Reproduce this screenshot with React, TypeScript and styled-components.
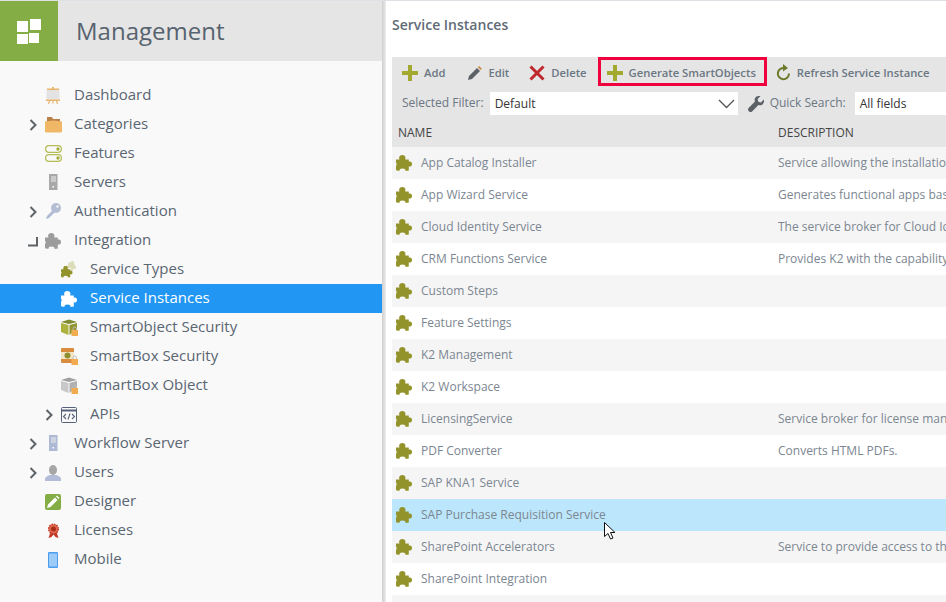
import React from "react";
import styled, { createGlobalStyle } from "styled-components";

const GlobalStyle = createGlobalStyle`
  html, body {
    margin: 0;
    padding: 0;
    height: 100%;
    overflow: hidden;
    background: #fff;
    font-family: "Open Sans", "Liberation Sans", sans-serif;
  }
  svg {
    flex: none;
  }
`;

// layout
const Page = styled.div`
  position: relative;
  display: flex;
  width: 946px;
  height: 602px;
  overflow: hidden;
  border-top: 1px solid #dfe0e5;
  box-sizing: border-box;
`;
const Sidebar = styled.aside`
  display: flex;
  flex-direction: column;
  flex: 0 0 382px;
  background: #f9f9f9;
`;
const Divider = styled.div`
  flex: 0 0 4px;
  background: linear-gradient(to right, #cfcfcf, #ececec);
`;
const Header = styled.header`
  display: flex;
  align-items: center;
  flex: 0 0 60px;
  background: #e5e5e5;
`;
const Logo = styled.div`
  display: flex;
  align-items: center;
  justify-content: center;
  width: 58px;
  height: 60px;
  background: #84ae45;
`;
const HeaderTitle = styled.h1`
  margin: 0 0 2px 18px;
  font-size: 24px;
  font-weight: 400;
  color: #57636f;
`;
const Tree = styled.nav`
  display: flex;
  flex-direction: column;
  padding-top: 20px;
`;
const TreeRow = styled.div<{ $level: number; $active?: boolean }>`
  display: flex;
  align-items: center;
  height: 29px;
  padding-left: ${(p) => 27 + p.$level * 16}px;
  font-size: 15px;
  color: ${(p) => (p.$active ? "#fff" : "#5a6672")};
  background: ${(p) => (p.$active ? "#2196f3" : "transparent")};
`;
const Toggle = styled.span`
  display: flex;
  align-items: center;
  justify-content: center;
  flex: 0 0 12px;
  height: 16px;
  margin-right: 5px;
`;
const TreeIcon = styled.span`
  display: flex;
  align-items: center;
  justify-content: center;
  flex: 0 0 18px;
  height: 18px;
  margin-right: 12px;
`;
const TreeLabel = styled.span`
  padding-bottom: 3px;
`;

const Main = styled.main`
  display: flex;
  flex-direction: column;
  flex: 1;
  min-width: 0;
  padding-left: 6px;
  background: #fff;
  overflow: hidden;
`;
const PageTitle = styled.h2`
  flex: 0 0 56px;
  margin: 0;
  padding-top: 14px;
  box-sizing: border-box;
  font-size: 14px;
  line-height: 20px;
  font-weight: 600;
  color: #5f6b76;
`;
const Toolbar = styled.div`
  display: flex;
  flex-direction: column;
  flex: 0 0 60px;
  background: #e5e5e5;
`;
const ButtonRow = styled.div`
  display: flex;
  align-items: center;
  height: 31px;
  padding-left: 10px;
`;
const ToolButton = styled.div<{ $after: number; $outlined?: boolean }>`
  position: relative;
  display: flex;
  align-items: center;
  gap: 6px;
  margin-right: ${(p) => p.$after}px;
  font-size: 11.25px;
  font-weight: 600;
  color: #6b7783;
  white-space: nowrap;
`;
const Highlight = styled.span`
  position: absolute;
  left: -9px;
  right: -11px;
  top: -8px;
  bottom: -5px;
  border: 3px solid #f0003c;
`;
const FilterRow = styled.div`
  display: flex;
  align-items: flex-start;
  height: 29px;
  padding: 4px 0 0 10px;
  box-sizing: border-box;
  font-size: 12px;
  line-height: 22px;
  color: #6b7783;
  white-space: nowrap;
`;
const Field = styled.div<{ $width: number; $before: number }>`
  display: flex;
  align-items: center;
  justify-content: space-between;
  flex: 0 0 ${(p) => p.$width}px;
  height: 23px;
  margin-left: ${(p) => p.$before}px;
  padding: 0 3px 0 5px;
  box-sizing: border-box;
  background: #fff;
  font-size: 12px;
  color: #333;
`;
const SearchIcon = styled.span`
  display: flex;
  align-items: center;
  height: 23px;
  margin: 0 6px 0 10px;
`;
const ColumnRow = styled.div<{ $bg: string; $height: number }>`
  display: grid;
  grid-template-columns: 386px 1fr;
  align-items: center;
  height: ${(p) => p.$height}px;
  flex: 0 0 ${(p) => p.$height}px;
  background: ${(p) => p.$bg};
  font-size: 12px;
  overflow: hidden;
  white-space: nowrap;
`;
const ColumnHead = styled.span<{ $inset: number }>`
  padding-left: ${(p) => p.$inset}px;
  color: #444;
  text-transform: uppercase;
`;
const NameCell = styled.span`
  display: flex;
  align-items: center;
  gap: 9px;
  padding-left: 4px;
  color: #7b8691;
`;
const CellText = styled.span`
  padding-bottom: 2px;
`;
const DescCell = styled.span`
  padding-bottom: 2px;
  color: #7b8691;
  overflow: hidden;
`;
const Cursor = styled.svg`
  position: absolute;
  left: 603px;
  top: 520px;
`;

// icons
const puzzlePath =
  "M0 4.500h3.500C2.800 3 3 0 6.300 0s3.600 3 2.900 4.500h3.600v2.200c1-.7 3.200-.4 3.200 2.300s-2.200 3-3.200 2.300v4.200L9.500 16c.3-1.500-.5-2.500-3-2.500s-3.300 1-3 2.500L0 15.200V11l.8-1.800L0 7.500z";

const Puzzle = ({ color, size = 16 }: { color: string; size?: number }) => (
  <svg width={size} height={size} viewBox="0 0 16 16" fill={color}>
    <path d={puzzlePath} />
  </svg>
);
const Plus = () => (
  <svg width="16" height="16" viewBox="0 0 16 16" fill="#a3a82f">
    <path d="M6 0h4v6h6v4h-6v6H6v-6H0V6h6z" />
  </svg>
);
const Pencil = () => (
  <svg width="15" height="16" viewBox="0 0 15 16">
    <path d="M1 15l1-4 8-8 3 3-8 8z" fill="#5b6167" />
    <path d="M10.800 2.200l1.300-1.300 2.800 2.800-1.300 1.400z" fill="#c98a45" />
  </svg>
);
const Cross = () => (
  <svg width="16" height="16" viewBox="0 0 16 16" stroke="#c0272d" strokeWidth="3" fill="none">
    <path d="M1.500 1.500l13 13M14.500 1.500l-13 13" />
  </svg>
);
const Refresh = () => (
  <svg width="15" height="17" viewBox="0 0 15 17" fill="none">
    <path d="M9 4.200A5.600 5.600 0 1 0 13 9.500" stroke="#6b7a2a" strokeWidth="2" />
    <path d="M7 0l5 4-5 3.500z" fill="#6b7a2a" />
  </svg>
);
const Wrench = () => (
  <svg width="16" height="16" viewBox="0 0 16 16" fill="#5b6167">
    <path d="M15.800 3.600l-2.900 2.800-2.600-.7-.7-2.600L12.400.2C10.400-.4 8.300.2 7.300 1.700c-.8 1.200-.9 2.700-.3 3.900L.6 12c-.8.800-.8 2 0 2.900l.6.500c.8.800 2.100.8 2.900 0l6.300-6.400c1.300.6 2.900.4 4.100-.5 1.300-1.100 1.900-3.100 1.300-4.900z" />
  </svg>
);
const Chevron = () => (
  <svg width="9" height="12" viewBox="0 0 9 12" fill="none" stroke="#5e6468" strokeWidth="2">
    <path d="M1.500 1l5 5-5 5" />
  </svg>
);
const Corner = () => (
  <svg width="12" height="12" viewBox="0 0 12 12" fill="none" stroke="#5e6468" strokeWidth="2">
    <path d="M1 10.500h9V2" />
  </svg>
);
const Select = () => (
  <svg width="17" height="10" viewBox="0 0 17 10" fill="none" stroke="#555" strokeWidth="1.300">
    <path d="M1 1l7.500 7.500L16 1" />
  </svg>
);
const LogoMark = () => (
  <svg width="24" height="25" viewBox="0 0 24 25" fill="#fff">
    <rect x="0" y="2" width="11" height="11" />
    <rect x="13" y="0" width="11" height="11" />
    <rect x="0" y="15" width="11" height="10" />
    <rect x="12" y="14" width="10" height="10" />
  </svg>
);
const Easel = () => (
  <svg width="16" height="17" viewBox="0 0 16 17">
    <rect x="7" y="0" width="2" height="2" fill="#e9b36c" />
    <rect x="2" y="1.500" width="12" height="1.500" fill="#e9b36c" />
    <rect x="1.500" y="3" width="13" height="9.500" fill="#e3e3e3" />
    <rect x="1" y="12.500" width="14" height="1.500" fill="#e9b36c" />
    <path d="M4.500 14l-1 3M11.500 14l1 3M8 14v2.500" stroke="#e9b36c" strokeWidth="1.200" />
  </svg>
);
const Folder = () => (
  <svg width="17" height="16" viewBox="0 0 17 16">
    <path d="M2 0h5l1 2h7v3H2z" fill="#b9824a" />
    <path d="M0 4.500l8-1 9 1v10l-1 1H1l-1-1z" fill="#f0b766" />
  </svg>
);
const Toggles = () => (
  <svg width="17" height="17" viewBox="0 0 17 17" fill="none" stroke="#b5bd55" strokeWidth="1.200">
    <rect x=".6" y=".6" width="15.800" height="6.800" rx="3.400" />
    <rect x=".6" y="9.600" width="15.800" height="6.800" rx="3.400" />
    <circle cx="13" cy="4" r="1.700" fill="#a3ad3a" stroke="none" />
    <circle cx="13" cy="13" r="1.700" fill="#a3ad3a" stroke="none" />
  </svg>
);
const Tower = ({ color }: { color: string }) => (
  <svg width="10" height="17" viewBox="0 0 10 17">
    <rect x="1" y="0" width="8.500" height="16" fill={color} />
    <path d="M3 3h5M3 5h5M3 7h5" stroke="#eee" strokeWidth="1" />
    <rect x="4.500" y="12" width="1.500" height="1.500" fill="#fff" />
  </svg>
);
const Key = () => (
  <svg width="17" height="17" viewBox="0 0 17 17">
    <path d="M1 16l1-3L8 7l2 2-6 6z" fill="#aeb9d6" />
    <circle cx="11" cy="5" r="5" fill="#b4bdd4" />
    <circle cx="12.500" cy="3.500" r="1.300" fill="#f2f2f2" />
  </svg>
);
const Lock = () => (
  <>
    <rect x="10.500" y="11" width="6.500" height="6" fill="#f2ab4e" />
    <path d="M12 11V9.700a1.700 1.700 0 0 1 3.400 0V11" fill="none" stroke="#bbb" strokeWidth="1" />
  </>
);
const Box = ({ top, left, right }: { top: string; left: string; right: string }) => (
  <svg width="17" height="17" viewBox="0 0 17 17">
    <path d="M0 3l8-2.500L16 3 8 5z" fill={top} />
    <path d="M0 4l7.500 2v10L0 13z" fill={left} />
    <path d="M8.500 6L16 4v6l-7.500 6z" fill={right} />
    <Lock />
  </svg>
);
const SmartBox = () => (
  <svg width="17" height="17" viewBox="0 0 17 17">
    <rect x="0" y="0" width="13" height="15" rx="1" fill="#d98c3e" />
    <rect x="0" y="4" width="13" height="7" fill="#f3e5c8" />
    <circle cx="6.500" cy="7.500" r="3" fill="#8d8f2c" />
    <Lock />
  </svg>
);
const Code = () => (
  <svg width="16" height="16" viewBox="0 0 16 16" fill="none" stroke="#55617a">
    <rect x=".5" y=".5" width="15" height="15" rx="1" />
    <path d="M0 3.500h16" strokeWidth="2" />
    <path d="M5 7l-2.500 2.500L5 12M11 7l2.500 2.500L11 12M9 6.500l-2 6" strokeWidth="1.100" />
  </svg>
);
const User = () => (
  <svg width="16" height="16" viewBox="0 0 16 16">
    <ellipse cx="8" cy="5" rx="4" ry="5" fill="#a6a6a6" />
    <path d="M0 16v-2c0-2 3-3.500 5-4h6c2 .5 5 2 5 4v2z" fill="#b2bcd8" />
  </svg>
);
const Designer = () => (
  <svg width="16" height="16" viewBox="0 0 16 16">
    <rect width="16" height="16" rx="2" fill="#84ae45" />
    <path d="M2 14l1-3.500 7-7 2.500 2.500-7 7zM11 2.500l1-1 2.500 2.500-1 1z" fill="#fff" />
  </svg>
);
const Ribbon = () => (
  <svg width="13" height="16" viewBox="0 0 13 16">
    <path d="M3.500 9L1.500 15l3-1 2-2.500 2 2.500 3 1-2-6z" fill="#c13a25" />
    <circle cx="6.500" cy="6" r="4.800" fill="#e2694f" strokeDasharray="1.500 1" strokeWidth="1.500" stroke="#c13a25" />
    <circle cx="6.500" cy="6" r="2.500" fill="#a82c18" />
  </svg>
);
const Phone = () => (
  <svg width="10" height="16" viewBox="0 0 10 16">
    <rect width="10" height="16" rx="1" fill="#4a9df2" />
    <rect x="1" y="1.500" width="8" height="13" fill="#9ccbf7" />
  </svg>
);
const ServiceTypes = () => (
  <svg width="17" height="17" viewBox="0 0 17 17">
    <g transform="translate(7 0) rotate(25 4 4) scale(.55)">
      <path d={puzzlePath} fill="#dcdcb8" />
    </g>
    <g transform="translate(0 5) scale(.72)">
      <path d={puzzlePath} fill="#93932b" />
    </g>
  </svg>
);

type TreeItem = {
  label: string;
  level: number;
  toggle?: "open" | "closed";
  icon: React.ReactNode;
  active?: boolean;
};

const treeItems: TreeItem[] = [
  { label: "Dashboard", level: 0, icon: <Easel /> },
  { label: "Categories", level: 0, toggle: "closed", icon: <Folder /> },
  { label: "Features", level: 0, icon: <Toggles /> },
  { label: "Servers", level: 0, icon: <Tower color="#a8a8a8" /> },
  { label: "Authentication", level: 0, toggle: "closed", icon: <Key /> },
  { label: "Integration", level: 0, toggle: "open", icon: <Puzzle color="#9c9c9c" /> },
  { label: "Service Types", level: 1, icon: <ServiceTypes /> },
  { label: "Service Instances", level: 1, active: true, icon: <Puzzle color="#fff" /> },
  {
    label: "SmartObject Security",
    level: 1,
    icon: <Box top="#7f8b30" left="#adb23e" right="#93962f" />,
  },
  { label: "SmartBox Security", level: 1, icon: <SmartBox /> },
  {
    label: "SmartBox Object",
    level: 1,
    icon: <Box top="#a0a0a0" left="#c8c8c8" right="#b0b0b0" />,
  },
  { label: "APIs", level: 1, toggle: "closed", icon: <Code /> },
  { label: "Workflow Server", level: 0, toggle: "closed", icon: <Tower color="#aeb9d6" /> },
  { label: "Users", level: 0, toggle: "closed", icon: <User /> },
  { label: "Designer", level: 0, icon: <Designer /> },
  { label: "Licenses", level: 0, icon: <Ribbon /> },
  { label: "Mobile", level: 0, icon: <Phone /> },
];

const services: [string, string][] = [
  ["App Catalog Installer", "Service allowing the installation of app catalog"],
  ["App Wizard Service", "Generates functional apps based on templates"],
  ["Cloud Identity Service", "The service broker for Cloud Identity"],
  ["CRM Functions Service", "Provides K2 with the capability to connect"],
  ["Custom Steps", ""],
  ["Feature Settings", ""],
  ["K2 Management", ""],
  ["K2 Workspace", ""],
  ["LicensingService", "Service broker for license management"],
  ["PDF Converter", "Converts HTML PDFs."],
  ["SAP KNA1 Service", ""],
  ["SAP Purchase Requisition Service", ""],
  ["SharePoint Accelerators", "Service to provide access to the accelerators"],
  ["SharePoint Integration", ""],
];

const rowColor = (index: number) => {
  if (index === 11) return "#bbe6fb";
  return index % 2 === 0 ? "#f5f5f5" : "#ffffff";
};

const App = () => {
  return (
    <Page>
      <GlobalStyle />
      <Sidebar>
        <Header>
          <Logo>
            <LogoMark />
          </Logo>
          <HeaderTitle>Management</HeaderTitle>
        </Header>
        <Tree>
          {treeItems.map((item) => (
            <TreeRow key={item.label} $level={item.level} $active={item.active}>
              <Toggle>
                {item.toggle === "closed" && <Chevron />}
                {item.toggle === "open" && <Corner />}
              </Toggle>
              <TreeIcon>{item.icon}</TreeIcon>
              <TreeLabel>{item.label}</TreeLabel>
            </TreeRow>
          ))}
        </Tree>
      </Sidebar>
      <Divider />
      <Main>
        <PageTitle>Service Instances</PageTitle>
        <Toolbar>
          <ButtonRow>
            <ToolButton $after={22}>
              <Plus />
              Add
            </ToolButton>
            <ToolButton $after={20}>
              <Pencil />
              Edit
            </ToolButton>
            <ToolButton $after={20}>
              <Cross />
              Delete
            </ToolButton>
            <ToolButton $after={20}>
              <Highlight />
              <Plus />
              Generate SmartObjects
            </ToolButton>
            <ToolButton $after={0}>
              <Refresh />
              Refresh Service Instance
            </ToolButton>
          </ButtonRow>
          <FilterRow>
            Selected Filter:
            <Field $width={248} $before={6}>
              Default
              <Select />
            </Field>
            <SearchIcon>
              <Wrench />
            </SearchIcon>
            Quick Search:
            <Field $width={200} $before={9}>
              All fields
            </Field>
          </FilterRow>
        </Toolbar>
        <ColumnRow $bg="#e5e5e5" $height={30}>
          <ColumnHead $inset={6}>Name</ColumnHead>
          <ColumnHead $inset={0}>Description</ColumnHead>
        </ColumnRow>
        {services.map(([name, description], index) => (
          <ColumnRow key={name} $bg={rowColor(index)} $height={32}>
            <NameCell>
              <Puzzle color="#93932b" />
              <CellText>{name}</CellText>
            </NameCell>
            <DescCell>{description}</DescCell>
          </ColumnRow>
        ))}
        <ColumnRow $bg="#f5f5f5" $height={32} />
      </Main>
      <Cursor width="14" height="20" viewBox="0 0 14 20">
        <path d="M1.500 1.500v14l3.500-3 2.500 5.500 2.500-1-2.500-5.500H12z" fill="#fff" stroke="#111" strokeWidth="1" />
      </Cursor>
    </Page>
  );
};

export default App;
